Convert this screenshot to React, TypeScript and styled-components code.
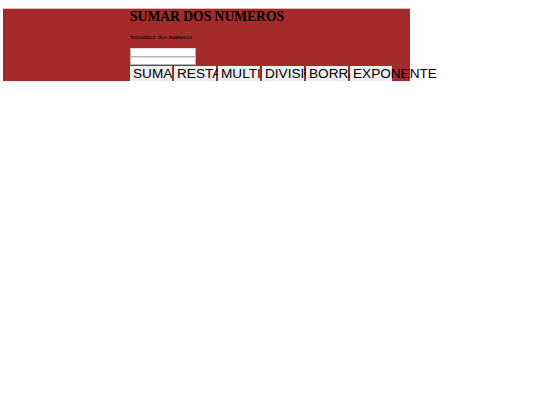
import React from 'react'
import styled, { createGlobalStyle } from 'styled-components'

const GlobalStyle = createGlobalStyle`
  body {
    margin: 0;
    background: #ffffff;
    font-family: 'Liberation Serif', 'Times New Roman', serif;
  }
`

const Panel = styled.div`
  box-sizing: border-box;
  width: 407px;
  margin: 9px 0 0 3px;
  padding: 0 0 0 127px;
  background: #a52a2a;
  box-shadow: 0 -1px 0 #e9b4b4;
`

const Title = styled.h2`
  margin: 0;
  font-family: 'Liberation Serif', 'Times New Roman', serif;
  font-size: 13.6px;
  font-weight: bold;
  line-height: 16px;
  color: #000;
`

const Hint = styled.p`
  margin: 8px 0 7px;
  font-size: 6.75px;
  line-height: 8px;
  color: #000;
`

const Field = styled.input`
  display: block;
  box-sizing: border-box;
  width: 66px;
  height: 8.5px;
  margin: 0;
  padding: 0;
  border: 1px solid #b4b4b4;
  border-top-color: #d8d8d8;
  background: #fff;
`

const Actions = styled.div`
  display: flex;
  gap: 2px;
  margin-top: 1px;
  height: 15px;
`

// fixed-width buttons: long labels run on and get covered by the next button
const Action = styled.button`
  flex: none;
  box-sizing: border-box;
  width: 42px;
  min-width: 42px;
  height: 15px;
  margin: 0;
  padding: 0 0 0 3px;
  border: none;
  background: #efefef;
  color: #000;
  font-family: 'Liberation Sans', Arial, sans-serif;
  font-size: 13.6px;
  line-height: 15px;
  text-align: left;
  white-space: nowrap;
  overflow: visible;
`

const operations = ['SUMA', 'RESTA', 'MULTIPLICAR', 'DIVISION', 'BORRAR', 'EXPONENTE']

const App = () => (
  <>
    <GlobalStyle />
    <Panel>
      <Title>SUMAR DOS NUMEROS</Title>
      <Hint>Introduce dos numeros</Hint>
      <Field type="text" />
      <Field type="text" />
      <Actions>
        {operations.map((op) => (
          <Action key={op} type="button">
            {op}
          </Action>
        ))}
      </Actions>
    </Panel>
  </>
)

export default App
